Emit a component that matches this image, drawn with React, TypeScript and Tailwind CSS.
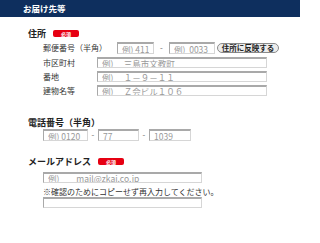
import React from 'react'

const font = { fontFamily: '"Noto Sans CJK JP", "Noto Sans", sans-serif' }

const inputCls =
  'block h-full bg-white border border-[#d6d6d6] border-t-2 border-t-[#a9a9a9] border-l-[#a9a9a9] px-[4px] text-[8.5px] leading-none text-[#777] placeholder:text-[#999] outline-none'

function Badge() {
  return (
    <span className="ml-[7px] inline-flex h-[7px] w-[26px] items-center justify-center rounded-[2px] bg-[#e60012] text-[5px] leading-none text-white">
      必須
    </span>
  )
}

function Heading({ children, badge }: { children: React.ReactNode; badge?: boolean }) {
  return (
    <div className="flex h-[10px] items-center pl-[28px] text-[9px] font-bold leading-none text-[#222]">
      {children}
      {badge && <Badge />}
    </div>
  )
}

function Dash({ w = 'w-[10px]' }: { w?: string }) {
  return <span className={`flex ${w} justify-center text-[8px] text-[#666]`}>-</span>
}

function AddressRow({ label, placeholder }: { label: string; placeholder: string }) {
  return (
    <div className="flex h-[11px] items-center">
      <span className="w-[54px] text-[8px] leading-none text-[#333]">{label}</span>
      <input className={`${inputCls} w-[170px]`} placeholder={placeholder} />
    </div>
  )
}

export default function App() {
  return (
    <div className="h-[243px] w-[300px] overflow-hidden bg-white" style={font}>
      {/* header */}
      <div className="flex h-[17px] items-center bg-[#0e2f5e] pl-[23px] text-[8.5px] font-bold text-white">
        お届け先等
      </div>

      {/* 住所 */}
      <div className="mt-[11px]">
        <Heading badge>住所</Heading>
      </div>
      <div className="mt-[4px] flex flex-col gap-[3px] pl-[43px]">
        <div className="flex h-[12px] items-center">
          <span className="mr-[10px] text-[8px] leading-none text-[#333]">郵便番号（半角）</span>
          <input className={`${inputCls} w-[37px]`} placeholder="例) 411" />
          <Dash w="w-[15px]" />
          <input className={`${inputCls} w-[46px]`} placeholder="例)  0033" />
          <button className="ml-[2px] flex h-[10px] w-[62px] items-center justify-center rounded-full border border-[#8a8a8a] bg-[#ececec] text-[7.5px] font-bold leading-none text-[#222]">
            住所に反映する
          </button>
        </div>
        <AddressRow label="市区町村" placeholder="例)　 三島市文教町" />
        <AddressRow label="番地" placeholder="例)　 １－９－１１" />
        <AddressRow label="建物名等" placeholder="例)　 Ｚ会ビル１０６" />
      </div>

      {/* 電話番号 */}
      <div className="mt-[21px]">
        <Heading>電話番号（半角）</Heading>
      </div>
      <div className="mt-[2px] flex h-[12px] items-center pl-[43px]">
        <input className={`${inputCls} w-[45px]`} placeholder="例) 0120" />
        <Dash />
        <input className={`${inputCls} w-[41px]`} placeholder="77" />
        <Dash />
        <input className={`${inputCls} w-[42px]`} placeholder="1039" />
      </div>

      {/* メールアドレス */}
      <div className="mt-[15px]">
        <Heading badge>メールアドレス</Heading>
      </div>
      <div className="mt-[6px] pl-[43px]">
        <div className="flex h-[11px]">
          <input className={`${inputCls} w-[159px]`} placeholder="例)　　mail@zkai.co.jp" />
        </div>
        <p className="mt-[4px] h-[10px] whitespace-nowrap text-[8px] leading-[10px] text-[#333]">
          ※確認のためにコピーせず再入力してください。
        </p>
        <div className="flex h-[11px]">
          <input className={`${inputCls} w-[159px]`} />
        </div>
      </div>
    </div>
  )
}
